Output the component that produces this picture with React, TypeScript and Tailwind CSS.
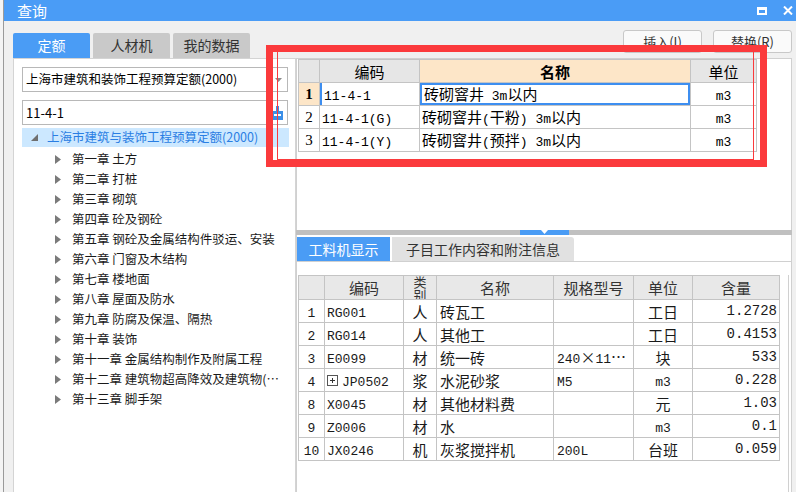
import React from 'react';

const ui = "font-['Noto_Sans_CJK_SC',sans-serif]";

// SimSun-like look: half-width ascii in a mono face, full-width CJK
const Mixed = ({ s }: { s: string }) => (
  <span className={`${ui} text-[15px] leading-none whitespace-pre`}>
    {s.split(/([\x20-\x7e]+)/).filter(Boolean).map((part, i) =>
      /^[\x20-\x7e]+$/.test(part) ? (
        <span key={i} className="font-['Liberation_Mono',monospace] text-[13px] leading-none">{part}</span>
      ) : (
        <span key={i} className="leading-none">{part}</span>
      ),
    )}
  </span>
);

const Cell = ({ s, align = 'start', className = '' }: { s: string; align?: 'start' | 'center' | 'end'; className?: string }) => (
  <div
    className={`h-[22px] flex items-center overflow-hidden whitespace-nowrap ${
      align === 'center' ? 'justify-center' : align === 'end' ? 'justify-end' : 'justify-start'
    } ${className}`}
  >
    <Mixed s={s} />
  </div>
);

const chapters = [
  '第一章 土方',
  '第二章 打桩',
  '第三章 砌筑',
  '第四章 砼及钢砼',
  '第五章 钢砼及金属结构件驳运、安装',
  '第六章 门窗及木结构',
  '第七章 楼地面',
  '第八章 屋面及防水',
  '第九章 防腐及保温、隔热',
  '第十章 装饰',
  '第十一章 金属结构制作及附属工程',
  '第十二章 建筑物超高降效及建筑物(构件)垂直运输',
  '第十三章 脚手架',
];

const quotaRows = [
  { n: '1', code: '11-4-1', name: '砖砌窨井 3m以内', unit: 'm3' },
  { n: '2', code: '11-4-1(G)', name: '砖砌窨井(干粉) 3m以内', unit: 'm3' },
  { n: '3', code: '11-4-1(Y)', name: '砖砌窨井(预拌) 3m以内', unit: 'm3' },
];

const resRows = [
  { n: '1', code: 'RG001', kind: '人', name: '砖瓦工', spec: '', unit: '工日', qty: '1.2728' },
  { n: '2', code: 'RG014', kind: '人', name: '其他工', spec: '', unit: '工日', qty: '0.4153' },
  { n: '3', code: 'E0099', kind: '材', name: '统一砖', spec: '240×11…', unit: '块', qty: '533' },
  { n: '4', code: 'JP0502', kind: '浆', name: '水泥砂浆', spec: 'M5', unit: 'm3', qty: '0.228', expand: true },
  { n: '8', code: 'X0045', kind: '材', name: '其他材料费', spec: '', unit: '元', qty: '1.03' },
  { n: '9', code: 'Z0006', kind: '材', name: '水', spec: '', unit: 'm3', qty: '0.1' },
  { n: '10', code: 'JX0246', kind: '机', name: '灰浆搅拌机', spec: '200L', unit: '台班', qty: '0.059' },
];

const Caret = () => (
  <svg width="6" height="9" viewBox="0 0 6 9" className="shrink-0">
    <path d="M0 0 L6 4.5 L0 9 Z" fill="#7a7a7a" />
  </svg>
);

const LeftPanel = () => (
  <div className={`w-[283px] mt-[12px] ml-[9px] flex flex-col ${ui}`}>
    <div className="flex h-[25px] gap-[3px] text-[14px]">
      <div className="w-[77px] bg-[#4a9cf5] text-white flex items-center justify-center rounded-t-[2px]">定额</div>
      <div className="w-[77px] bg-[#c9c9c9] text-[#333] flex items-center justify-center rounded-t-[2px]">人材机</div>
      <div className="w-[77px] bg-[#c9c9c9] text-[#333] flex items-center justify-center rounded-t-[2px]">我的数据</div>
    </div>
    <div className="flex-1 bg-white border border-[#d4d4d4] border-b-0 pl-[8px] pr-[6px] pt-[8px]">
      <div className="h-[25px] w-[266px] border border-[#b8b8b8] flex items-center justify-between pl-[3px] pr-[5px] text-[12.5px] text-black">
        <span>上海市建筑和装饰工程预算定额(2000)</span>
        <svg width="7" height="4" viewBox="0 0 7 4"><path d="M0 0 H7 L3.5 4 Z" fill="#8a8a8a" /></svg>
      </div>
      <div className="h-[25px] w-[266px] mt-[8px] border border-[#b8b8b8] flex items-center justify-between pl-[3px] pr-[4px] text-[13px] text-black">
        <span>11-4-1</span>
        <svg width="11" height="14" viewBox="0 0 11 14">
          <rect x="4" y="0" width="3" height="5" fill="#3b8fe8" />
          <rect x="0" y="5" width="11" height="9" fill="#3b8fe8" />
          <rect x="2" y="8" width="7" height="2" fill="#ffffff" />
        </svg>
      </div>
      <div className="mt-[3px] h-[19px] w-[267px] bg-[#cce8ff] flex items-center pl-[9px] text-[12.5px] text-[#2a7ee3]">
        <svg width="7" height="7" viewBox="0 0 7 7" className="mr-[9px]"><path d="M7 0 V7 H0 Z" fill="#6f6f6f" /></svg>
        <span>上海市建筑与装饰工程预算定额(2000)</span>
      </div>
      <div className="mt-[2px]">
        {chapters.map((c) => (
          <div key={c} className="h-[20px] flex items-center pl-[33px] text-[12.5px] text-[#1a1a1a]">
            <Caret />
            <span className="ml-[11px] w-[210px] truncate">{c}</span>
          </div>
        ))}
      </div>
    </div>
  </div>
);

const QuotaTable = () => (
  <table className="table-fixed border-collapse text-black">
    <colgroup>
      <col className="w-[21px]" />
      <col className="w-[100px]" />
      <col className="w-[271px]" />
      <col className="w-[66px]" />
    </colgroup>
    <thead>
      <tr className={`h-[23px] bg-[#e6e6e6] text-[15px] leading-[21px] ${ui}`}>
        <th className="border border-[#c4c4c4]"></th>
        <th className="border border-[#c4c4c4] font-normal">编码</th>
        <th className="border border-[#c4c4c4] font-bold bg-[#fde6c8]">名称</th>
        <th className="border border-[#c4c4c4] font-normal">单位</th>
      </tr>
    </thead>
    <tbody>
      {quotaRows.map((r, i) => (
        <tr key={r.n} className="h-[23px]">
          <td className={`border border-[#c4c4c4] p-0 ${i === 0 ? 'bg-[#fde6c8] font-bold' : 'bg-white'}`}>
            <div className="h-[22px] flex items-center justify-center font-['Liberation_Serif',serif] text-[15px] leading-none">{r.n}</div>
          </td>
          <td className="border border-[#c4c4c4] p-0">
            <Cell s={r.code} className={`pl-[2px] ${i === 0 ? 'border-l-2 border-[#3d8ef0]' : ''}`} />
          </td>
          <td className="border border-[#c4c4c4] p-0">
            <Cell s={r.name} className={`pl-[2px] ${i === 0 ? 'border-2 border-[#3d8ef0]' : ''}`} />
          </td>
          <td className="border border-[#c4c4c4] p-0"><Cell s={r.unit} align="center" /></td>
        </tr>
      ))}
    </tbody>
  </table>
);

const ResourceTable = () => (
  <table className="table-fixed border-collapse text-[#1a1a1a]">
    <colgroup>
      <col className="w-[26px]" />
      <col className="w-[79px]" />
      <col className="w-[33px]" />
      <col className="w-[117px]" />
      <col className="w-[80px]" />
      <col className="w-[59px]" />
      <col className="w-[87px]" />
    </colgroup>
    <thead>
      <tr className={`h-[24px] bg-[#e8e8e8] text-[15px] leading-[21px] text-[#333] ${ui}`}>
        <th className="border border-[#c4c4c4]"></th>
        <th className="border border-[#c4c4c4] font-normal">编码</th>
        <th className="border border-[#c4c4c4] font-normal p-0">
          <div className="h-[23px] overflow-hidden flex items-center justify-center">
            <div className="w-[14px] leading-[13px] text-[13px] break-all">类别</div>
          </div>
        </th>
        <th className="border border-[#c4c4c4] font-normal">名称</th>
        <th className="border border-[#c4c4c4] font-normal">规格型号</th>
        <th className="border border-[#c4c4c4] font-normal">单位</th>
        <th className="border border-[#c4c4c4] font-normal">含量</th>
      </tr>
    </thead>
    <tbody>
      {resRows.map((r) => (
        <tr key={r.n} className="h-[23px] bg-white">
          <td className="border border-[#c4c4c4] p-0"><Cell s={r.n} align="center" /></td>
          <td className="border border-[#c4c4c4] p-0">
            <div className="h-[22px] flex items-center pl-[2px]">
              {r.expand && (
                <span className="w-[11px] h-[11px] border border-[#555] mr-[4px] relative shrink-0">
                  <span className="absolute left-[2px] top-[4px] w-[5px] h-[1px] bg-[#333]" />
                  <span className="absolute left-[4px] top-[2px] w-[1px] h-[5px] bg-[#333]" />
                </span>
              )}
              <Mixed s={r.code} />
            </div>
          </td>
          <td className="border border-[#c4c4c4] p-0"><Cell s={r.kind} align="center" /></td>
          <td className="border border-[#c4c4c4] p-0"><Cell s={r.name} className="pl-[3px]" /></td>
          <td className="border border-[#c4c4c4] p-0"><Cell s={r.spec} className="pl-[3px]" /></td>
          <td className="border border-[#c4c4c4] p-0"><Cell s={r.unit} align="center" /></td>
          <td className="border border-[#c4c4c4] p-0">
            <div className="h-[22px] flex items-center justify-end pr-[2px] font-['Liberation_Mono',monospace] text-[14px] leading-none">{r.qty}</div>
          </td>
        </tr>
      ))}
    </tbody>
  </table>
);

const RightPanel = () => (
  <div className={`w-[496px] flex flex-col ${ui}`}>
    <div className="h-[37px] flex items-start justify-end gap-[11px] pt-[9px]">
      <button className="w-[79px] h-[23px] bg-[#fafafa] border border-[#c8c8c8] rounded-[3px] text-[13px] text-[#333]">插入(I)</button>
      <button className="w-[79px] h-[23px] bg-[#fafafa] border border-[#c8c8c8] rounded-[3px] text-[13px] text-[#333]">替换(R)</button>
    </div>
    <div className="h-[172px] bg-white border border-[#d0d0d0] border-b-0 pl-[1px]">
      <QuotaTable />
    </div>
    <div className="h-[5px] bg-[#c0c0c0] flex justify-center">
      <div className="w-[49px] h-[5px] bg-[#4a9cf5] flex justify-center">
        <svg width="7" height="4" viewBox="0 0 7 4"><path d="M0 0 H7 L3.5 4 Z" fill="#ffffff" /></svg>
      </div>
    </div>
    <div className="flex-1 bg-white border-x border-[#d0d0d0] pt-[2px] flex flex-col">
      <div className="h-[24px] flex gap-[2px] text-[14px]">
        <div className="w-[93px] bg-[#4a9cf5] text-white flex items-center justify-center">工料机显示</div>
        <div className="w-[182px] bg-[#e1e1e1] text-[#333] flex items-center justify-center rounded-tr-[3px]">子目工作内容和附注信息</div>
      </div>
      <div className="flex-1 border-t border-[#d0d0d0] pt-[13px] pl-[1px] pr-[2px]">
        <div className="h-full border-r border-[#d0d0d0]">
          <ResourceTable />
        </div>
      </div>
    </div>
  </div>
);

export default function App() {
  return (
    <div className="w-[796px] h-[492px] relative overflow-hidden bg-[#f0f0f0] flex">
      <div className="w-[4px] bg-[#f4f4f4] border-r border-[#9a9a9a]" />
      <div className="flex-1 flex flex-col">
        <div className={`h-[21px] bg-[#4a9cf6] flex items-center justify-between pl-[13px] pr-[3px] ${ui}`}>
          <span className="text-white text-[15px] leading-none">查询</span>
          <div className="flex items-center gap-[16px]">
            <div className="w-[10px] h-[8px] border-2 border-t-[3px] border-white" />
            <svg width="10" height="9" viewBox="0 0 10 9">
              <path d="M1 0.5 L9 8.5 M9 0.5 L1 8.5" stroke="#ffffff" strokeWidth="2" />
            </svg>
          </div>
        </div>
        <div className="flex-1 flex">
          <LeftPanel />
          <RightPanel />
        </div>
      </div>

      {/* red annotation box */}
      <div className="absolute left-[266px] top-[45px] w-[501px] h-[122px] border-[7px] border-[#fb3a3c] pointer-events-none" />
      <div className="absolute left-[277px] top-[45px] w-[477px] h-[115px] border border-[#fb3a3c] pointer-events-none" />
    </div>
  );
}
